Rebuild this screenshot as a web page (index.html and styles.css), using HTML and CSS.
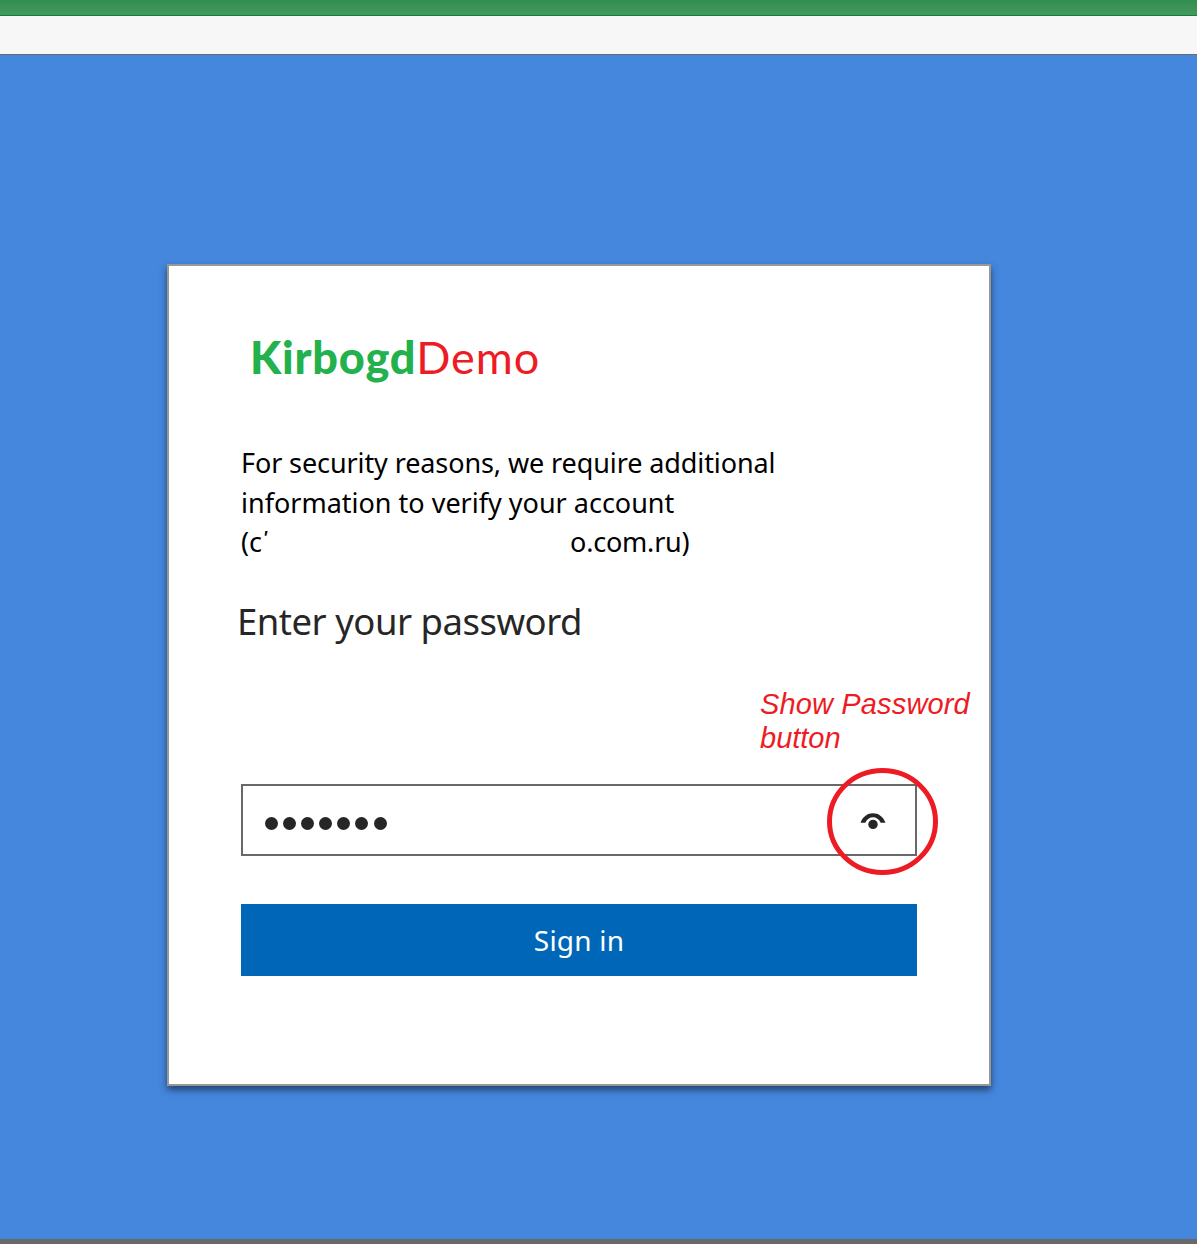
FILE: index.html
```html
<!DOCTYPE html>
<html lang="en">
<head>
<meta charset="utf-8">
<title>Sign in</title>
<link rel="stylesheet" href="styles.css">
</head>
<body>
<header class="titlebar"></header>
<div class="toolbar"></div>
<main class="page">
  <section class="card">
    <div class="logo"><span class="logo-first">Kirbogd</span><span class="logo-second">Demo</span></div>
    <p class="message">
      <span class="line line-one">For security reasons, we require additional</span>
      <span class="line line-two">information to verify your account</span>
      <span class="line account"><span class="account-start">(c<span class="tick">'</span></span><span class="account-end">o.com.ru)</span></span>
    </p>
    <h1 class="heading">Enter your password</h1>
    <p class="note"><span class="note-one">Show Password</span><br>button</p>
    <div class="field">
      <div class="dots"><i class="dot"></i><i class="dot"></i><i class="dot"></i><i class="dot"></i><i class="dot"></i><i class="dot"></i><i class="dot"></i></div>
      <svg class="eye" width="26" height="18" viewBox="0 0 26 18"><path d="M0.5 10.7C3 4.5 7.5 1.3 13 1.3S23 4.5 25.5 10.7H20.7C19 7.2 16.2 5.3 13 5.3S7 7.2 5.3 10.7Z"/><circle cx="13" cy="12.4" r="4.7"/></svg>
      <svg class="ring" width="111" height="107" viewBox="0 0 111 107"><ellipse cx="55.5" cy="53.5" rx="53" ry="51"/></svg>
    </div>
    <button class="submit" type="button">Sign in</button>
  </section>
</main>
<footer class="bottombar"></footer>
</body>
</html>
```
FILE: styles.css
```css
* { box-sizing: border-box; }
body {
  margin: 0;
  height: 1244px;
  display: flex;
  flex-direction: column;
  overflow: hidden;
  background: #4587dd;
  font-family: "Noto Sans", "Open Sans", sans-serif;
}
.titlebar {
  height: 16px;
  background: linear-gradient(#318e50, #45985e);
  border-bottom: 1px solid #128033;
}
.toolbar {
  height: 39px;
  background: #f7f7f7;
  border-bottom: 1px solid #6b6b6b;
}
.page {
  flex: 1;
  padding: 209px 0 0 167px;
}
.card {
  width: 824px;
  height: 822px;
  padding: 64px 72px 0;
  border: 2px solid #979797;
  background: #fff;
  box-shadow: 0 4px 7px rgba(0, 0, 0, 0.5);
  display: flex;
  flex-direction: column;
}
.logo {
  height: 54px;
  padding-left: 9px;
  font: 45px/54px Lato, sans-serif;
  white-space: nowrap;
}
.logo-first {
  color: #22b14c;
  font-weight: 900;
  letter-spacing: 0.8px;
}
.logo-second {
  color: #ed1c24;
  letter-spacing: 0.9px;
}
.message {
  margin: 59px 0 0;
  font-size: 27px;
  line-height: 39.5px;
  color: #000;
}
.line {
  display: block;
  white-space: nowrap;
}
.line-one {
  letter-spacing: -0.1px;
}
.account {
  display: flex;
}
.account-start {
  width: 329px;
}
.account-end {
  letter-spacing: -0.2px;
}
.tick {
  margin-left: 1px;
  font-size: 17px;
  font-weight: 700;
  font-style: italic;
  vertical-align: 8px;
  line-height: 1;
}
.heading {
  margin: 34px 0 0 -4px;
  font-size: 36.5px;
  font-weight: 400;
  line-height: 50px;
  letter-spacing: -0.5px;
  color: #262626;
  white-space: nowrap;
}
.note {
  margin: 41px 0 0 519px;
  font: italic 29px/34px "Liberation Sans", Arial, sans-serif;
  color: #ed1c24;
  white-space: nowrap;
}
.note-one {
  letter-spacing: 0.15px;
}
.field {
  position: relative;
  margin-top: 29px;
  height: 72px;
  padding: 0 29px 0 22px;
  border: 2px solid #696969;
  display: flex;
  align-items: center;
  justify-content: space-between;
}
.dots {
  display: flex;
  gap: 5.1px;
  padding-top: 7px;
}
.dot {
  width: 13px;
  height: 13px;
  border-radius: 50%;
  background: #262626;
}
.eye {
  margin-top: 2px;
  fill: #262626;
}
.ring {
  position: absolute;
  left: 584px;
  top: -18px;
  fill: none;
  stroke: #ed1c24;
  stroke-width: 5px;
}
.submit {
  margin-top: 48px;
  height: 72px;
  padding: 1px 0 0;
  border: 0;
  background: #0067b8;
  color: #fff;
  font: 28px "Noto Sans", "Open Sans", sans-serif;
  letter-spacing: 0.2px;
}
.bottombar {
  height: 5px;
  background: #696969;
}
```
